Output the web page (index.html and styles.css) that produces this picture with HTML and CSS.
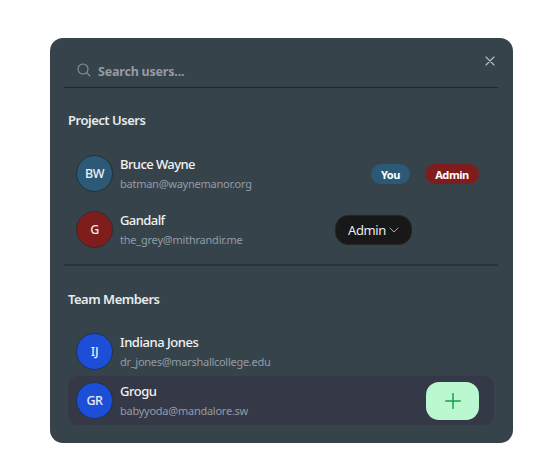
FILE: index.html
```html
<!DOCTYPE html>
<html lang="en">
<head>
<meta charset="utf-8">
<title>Share project</title>
<link rel="stylesheet" href="styles.css">
</head>
<body>
<main class="dialog">
  <header class="search">
    <svg class="search-icon" viewBox="0 0 14 14"><circle cx="6" cy="6" r="5"/><path d="M9.7 9.7 13 13"/></svg>
    <span class="placeholder">Search users...</span>
    <svg class="close" viewBox="0 0 10 10"><path d="M1 1 9 9M9 1 1 9"/></svg>
  </header>
  <section class="group project">
    <h2 class="project-title">Project Users</h2>
    <div class="user">
      <div class="avatar teal">BW</div>
      <div class="info"><div class="name n1">Bruce Wayne</div><div class="email e1">batman@waynemanor.org</div></div>
      <span class="badge you">You</span>
      <span class="badge admin">Admin</span>
    </div>
    <div class="user second">
      <div class="avatar red">G</div>
      <div class="info"><div class="name n2">Gandalf</div><div class="email e2">the_grey@mithrandir.me</div></div>
      <button class="role"><span>Admin</span><svg class="chevron" viewBox="0 0 10 6"><path d="M1 1 5 5 9 1"/></svg></button>
    </div>
  </section>
  <section class="group team">
    <h2 class="team-title">Team Members</h2>
    <div class="user">
      <div class="avatar blue">IJ</div>
      <div class="info"><div class="name n3">Indiana Jones</div><div class="email e3">dr_jones@marshallcollege.edu</div></div>
    </div>
    <div class="user selected">
      <div class="avatar blue">GR</div>
      <div class="info"><div class="name n4">Grogu</div><div class="email e4">babyyoda@mandalore.sw</div></div>
      <button class="add" aria-label="Add"><svg viewBox="0 0 16 16"><path d="M8 .7v14.6M.7 8h14.6"/></svg></button>
    </div>
  </section>
</main>
</body>
</html>
```
FILE: styles.css
```css
* { box-sizing: border-box; }
body { margin: 0; background: #fff; font-family: "Noto Sans", "Open Sans", sans-serif; }
svg { display: block; fill: none; stroke-linecap: round; stroke-linejoin: round; }
.dialog {
  width: 463px; height: 405px; margin: 38px 0 0 50px; padding: 0 15px 0 14px;
  background: #37434a; border-radius: 13px; overflow: hidden;
}
.search {
  height: 50px; padding: 15px 3px 0 13px; display: flex; align-items: flex-start;
  border-bottom: 1px solid #20272f;
}
.search-icon { width: 14px; height: 14px; margin-top: 10px; stroke: #8b939b; stroke-width: 1.1; }
.placeholder {
  flex: 1; margin-left: 7px; line-height: 37px; font-size: 12.5px; font-weight: 700;
  letter-spacing: -.2px; color: #949ba4;
}
.close { width: 10px; height: 10px; margin-top: 3px; stroke: #b6bdc3; stroke-width: 1.1; }
.project { height: 178px; border-bottom: 2px solid #293238; padding-top: 23px; }
.team { padding-top: 23px; }
h2 {
  margin: 0 0 22px 4px; height: 20px; line-height: 19px;
  font-size: 13px; font-weight: 600; color: #e8ebee;
}
.project-title { letter-spacing: -.48px; }
.team-title { letter-spacing: -.5px; margin-bottom: 18px; line-height: 20px; }
.user {
  height: 49px; margin: 0 0 0 4px; padding: 0 15px 0 8px; border-radius: 10px;
  display: flex; align-items: center;
}
.selected, .user { margin-right: 4px; }
.project .user { margin-top: -4px; }
.project .second { margin-top: 7px; }
.avatar {
  width: 37px; height: 37px; flex: none; border: 1.5px solid #20303d; border-radius: 50%;
  display: grid; place-items: center; font-size: 12.5px; font-weight: 500; letter-spacing: -.4px; color: #e9eef2;
}
.teal { background: #2c5975; }
.red { background: #7f1d1d; border-color: #302c31; }
.blue { background: #1d4ed8; border-color: #1d3354; }
.info { flex: 1; margin-left: 7px; }
.name { height: 19px; line-height: 18px; font-size: 13px; font-weight: 500; color: #f0f2f4; }
.n1 { letter-spacing: -.57px; }
.n2 { letter-spacing: -.58px; }
.n3 { letter-spacing: -.46px; }
.n4 { letter-spacing: -.5px; }
.email { height: 19px; line-height: 19px; font-size: 11px; color: #939ca6; }
.e1 { letter-spacing: -.25px; }
.e2 { letter-spacing: -.22px; }
.e3 { letter-spacing: -.28px; }
.e4 { letter-spacing: -.25px; }
.badge {
  height: 20px; line-height: 21px; border-radius: 10px; text-align: center;
  font-size: 11px; font-weight: 700; letter-spacing: -.4px; color: #fff;
}
.you { width: 39px; background: #2c5975; }
.admin { width: 54px; margin-left: 15px; background: #7f1d1d; }
button { border: 0; padding: 0; font-family: inherit; }
.role {
  width: 77px; height: 30px; margin-right: 67px; border-radius: 13px; border: 1px solid #252626;
  background: #181819; color: #e8eaec; font-size: 13px; letter-spacing: -.35px;
  display: flex; align-items: center; justify-content: center; gap: 3px;
}
.chevron { width: 10px; height: 6px; stroke: #a5a8aa; stroke-width: 1; }
.selected { background: #343847; }
.add {
  width: 53px; height: 38px; border-radius: 13px; background: #bbf7d0;
  display: grid; place-items: center;
}
.add svg { width: 16px; height: 16px; stroke: #16a34a; stroke-width: 1.5; }
```
